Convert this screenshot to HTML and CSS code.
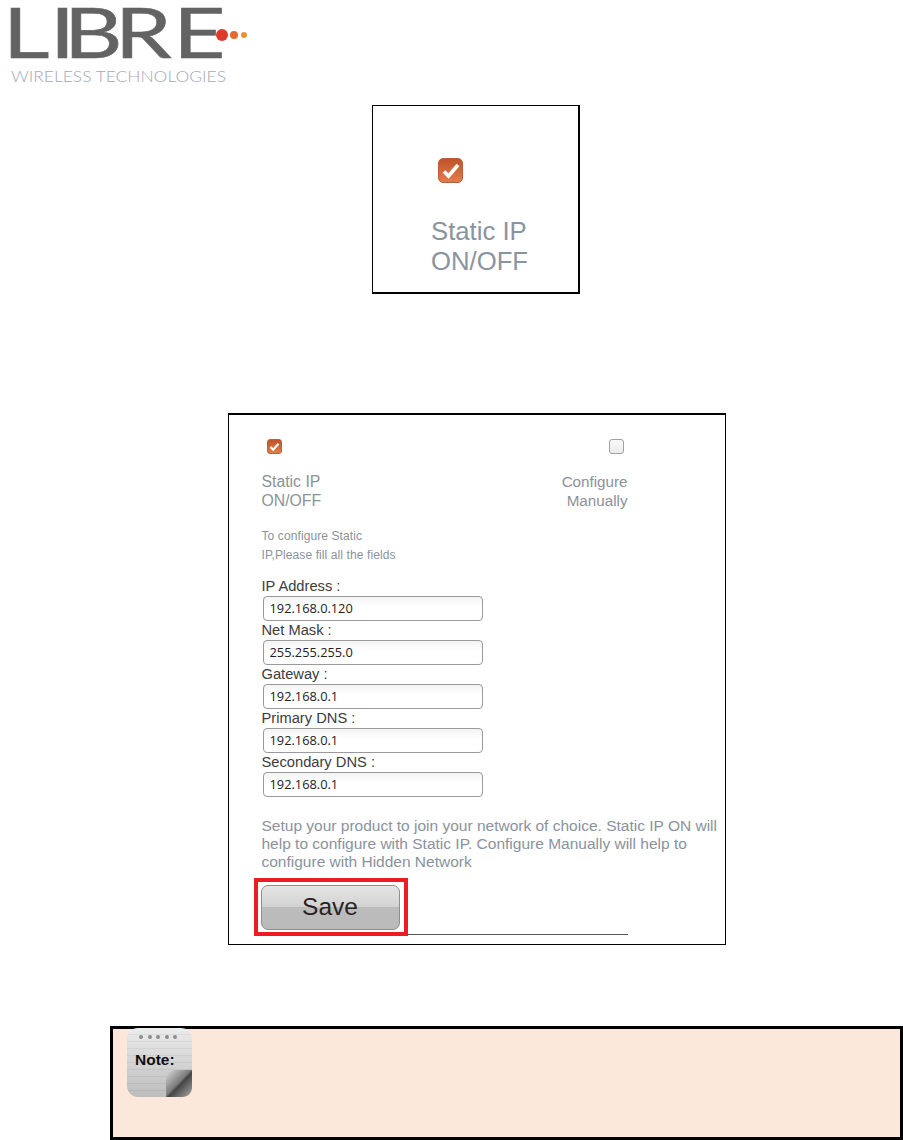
FILE: index.html
```html
<!DOCTYPE html>
<html lang="en">
<head>
<meta charset="utf-8">
<title>Static IP</title>
<link rel="stylesheet" href="styles.css">
</head>
<body>
<header class="logo">
  <svg width="260" height="90" viewBox="0 0 260 90" aria-label="Libre Wireless Technologies">
    <text transform="scale(1.3 1)" x="2.2 38.3 49 88.3 133" y="58" class="logo-name">LIBRE</text>
    <circle cx="222" cy="35" r="6" fill="#dc3a2a"/>
    <circle cx="234" cy="35" r="4" fill="#e56a2c"/>
    <circle cx="244" cy="35" r="3" fill="#ee9038"/>
    <text x="11" y="82" class="logo-tag" textLength="215" lengthAdjust="spacingAndGlyphs">WIRELESS TECHNOLOGIES</text>
  </svg>
</header>
<main class="content">
  <section class="figure figure-small">
    <span class="check check-on check-large">
      <svg viewBox="0 0 24 24" width="24" height="24"><path d="M5 12.5l4.5 4.5 9.5-11" class="tick tick-large"/></svg>
    </span>
    <p class="toggle-label-large">Static IP<br>ON/OFF</p>
  </section>

  <section class="figure figure-form">
    <div class="toggles">
      <div class="toggle">
        <span class="check check-on">
          <svg viewBox="0 0 15 15" width="15" height="15"><path d="M3.5 8l2.7 2.7 5.3-6" class="tick"/></svg>
        </span>
        <p class="toggle-label">Static IP<br>ON/OFF</p>
      </div>
      <div class="toggle toggle-right">
        <span class="check check-off"></span>
        <p class="toggle-label toggle-label-right">Configure<br>Manually</p>
      </div>
    </div>
    <p class="hint">To configure Static<br>IP,Please fill all the fields</p>
    <div class="fields">
      <label class="field"><span class="field-name">IP Address :</span><input class="field-input" value="192.168.0.120"></label>
      <label class="field"><span class="field-name">Net Mask :</span><input class="field-input" value="255.255.255.0"></label>
      <label class="field"><span class="field-name">Gateway :</span><input class="field-input" value="192.168.0.1"></label>
      <label class="field"><span class="field-name">Primary DNS :</span><input class="field-input" value="192.168.0.1"></label>
      <label class="field"><span class="field-name">Secondary DNS :</span><input class="field-input" value="192.168.0.1"></label>
    </div>
    <p class="description">Setup your product to join your network of choice. Static IP ON will help to configure with Static IP. Configure Manually will help to configure with Hidden Network</p>
    <div class="save-highlight"><button class="save" type="button">Save</button></div>
    <div class="rule"></div>
  </section>

  <aside class="note">
    <div class="note-icon">
      <div class="note-dots"><i></i><i></i><i></i><i></i><i></i></div>
      <span class="note-word">Note:</span>
      <svg class="note-curl" viewBox="0 0 26 27" width="26" height="27">
        <defs>
          <linearGradient id="curl" x1="0" y1="0" x2="1" y2="1">
            <stop offset="0" stop-color="#dcdcdc"/>
            <stop offset="0.48" stop-color="#7a7a7a"/>
            <stop offset="0.54" stop-color="#444"/>
            <stop offset="1" stop-color="#ababab"/>
          </linearGradient>
        </defs>
        <path d="M26 0H10C4 0 0 4 0 10v17h16c6 0 10-4 10-10z" fill="url(#curl)"/>
      </svg>
    </div>
  </aside>
</main>
</body>
</html>
```
FILE: styles.css
```css
html, body {
  margin: 0;
  padding: 0;
  background: #fff;
  overflow: hidden;
}
body {
  height: 1140px;
  font-family: "Liberation Sans", Arial, sans-serif;
}
p { margin: 0; }

.logo { height: 105px; }
.logo svg { display: block; }
.logo-name {
  font-family: Lato, "Liberation Sans", sans-serif;
  font-size: 70px;
  fill: #636363;
  stroke: #636363;
  stroke-width: 0.5;
}
.logo-tag {
  font-family: Lato, "Liberation Sans", sans-serif;
  font-size: 15.5px;
  font-weight: 300;
  fill: #a4a9b5;
}

.content {
  margin-left: 50px;
  display: flex;
  flex-direction: column;
  align-items: center;
}

.figure {
  box-sizing: border-box;
  background: #fff;
  border: 1px solid #000;
}
.figure-small {
  width: 208px;
  height: 189px;
  margin-left: -1px;
  border-right-width: 2px;
  border-bottom-width: 2px;
  padding: 52px 0 0 58px;
}
.figure-form {
  width: 498px;
  height: 532px;
  margin-top: 119px;
  border-top-width: 2px;
  padding: 24px 0 0 33px;
}

.check {
  display: block;
  box-sizing: border-box;
  width: 15px;
  height: 15px;
  border-radius: 3px;
}
.check-on {
  background: linear-gradient(#c2522a, #e27c4e);
  border: 1px solid #b8603c;
}
.check-off {
  background: linear-gradient(#f8f8f8, #ececec);
  border: 1px solid #a0a0a0;
}
.check svg { display: block; margin: -1px; }
.check-large {
  width: 25px;
  height: 25px;
  border-radius: 5px;
  margin-left: 7px;
}
.check-large svg { margin: 0; }
.tick {
  fill: none;
  stroke: #fff;
  stroke-width: 2.2;
}
.tick-large { stroke-width: 3.6; }

.toggle-label-large {
  margin-top: 33px;
  font-size: 25.7px;
  line-height: 30px;
  color: #8a94a0;
}

.toggles {
  display: flex;
  justify-content: space-between;
  width: 366px;
}
.toggle { width: 70px; }
.toggle .check { margin-left: 5px; }
.toggle-right { text-align: right; }
.toggle-right .check { margin-left: auto; margin-right: 4px; }
.toggle-label {
  margin-top: 18px;
  font-size: 15.8px;
  line-height: 19px;
  color: #8a929c;
}
.toggle-label-right { font-size: 15.2px; }
.hint {
  margin-top: 17px;
  font-size: 12px;
  line-height: 19px;
  letter-spacing: 0.1px;
  color: #8a929c;
}

.fields { margin-top: 12px; }
.field { display: block; }
.field-name {
  display: block;
  height: 19px;
  font-size: 14.7px;
  line-height: 19px;
  color: #3c3c3c;
}
.field-input {
  display: block;
  box-sizing: border-box;
  width: 220px;
  height: 25px;
  margin: 0 0 0 1px;
  padding: 0 6px 2px;
  border: 1px solid #9a9a9a;
  border-radius: 4px;
  background: linear-gradient(#f4f4f4, #fff 45%);
  font-family: "Open Sans", sans-serif;
  font-size: 12.8px;
  color: #222;
  outline: none;
}

.description {
  width: 462px;
  margin-top: 20px;
  font-size: 15.5px;
  line-height: 18px;
  color: #8a929c;
}

.save-highlight {
  position: relative;
  z-index: 1;
  box-sizing: border-box;
  width: 154px;
  height: 58px;
  margin: 7px 0 0 -8px;
  padding: 3px;
  border: 4px solid #ed1c24;
  background: #fff;
}
.save {
  display: block;
  width: 139px;
  height: 45px;
  padding: 0 0 2px;
  border: 1px solid #8e8e8e;
  border-radius: 7px;
  background: linear-gradient(#e6e6e6, #d2d2d2 48%, #bcbcbc 50%, #bababa);
  font-family: "Liberation Sans", sans-serif;
  font-size: 24.5px;
  color: #2a2226;
}
.rule {
  width: 366px;
  height: 1px;
  margin-top: -2px;
  background: #555;
}

.note {
  align-self: stretch;
  box-sizing: border-box;
  height: 114px;
  margin: 81px 0 0 60px;
  padding: 0 0 0 14px;
  border: 3px solid #000;
  background: #fce8da;
}
.note-icon {
  position: relative;
  box-sizing: border-box;
  width: 65px;
  height: 69px;
  margin-top: -1px;
  padding: 7px 0 0 8px;
  border-radius: 11px;
  background:
    repeating-linear-gradient(transparent 0, transparent 6px, rgba(0, 0, 0, 0.05) 6px, rgba(0, 0, 0, 0.05) 7px),
    linear-gradient(#ececec, #bdbdbd);
}
.note-dots {
  display: flex;
  gap: 4.5px;
  padding-left: 4px;
}
.note-dots i {
  display: block;
  width: 4px;
  height: 4px;
  border-radius: 50%;
  background: #8c8c8c;
}
.note-word {
  display: block;
  margin-top: 12px;
  font-family: "Liberation Sans", sans-serif;
  font-size: 15.5px;
  font-weight: 700;
  line-height: 17px;
  color: #111;
}
.note-curl {
  position: absolute;
  right: 0;
  bottom: 0;
}
```
